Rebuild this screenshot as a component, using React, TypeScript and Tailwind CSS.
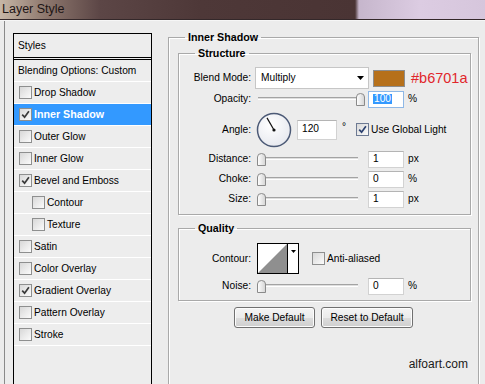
import clsx from 'clsx';

const styleRows = [
  { label: 'Drop Shadow' },
  { label: 'Inner Shadow', checked: true, active: true },
  { label: 'Outer Glow' },
  { label: 'Inner Glow' },
  { label: 'Bevel and Emboss', checked: true },
  { label: 'Contour', indent: true },
  { label: 'Texture', indent: true },
  { label: 'Satin' },
  { label: 'Color Overlay' },
  { label: 'Gradient Overlay', checked: true },
  { label: 'Pattern Overlay' },
  { label: 'Stroke' },
];

const Check = ({ checked, blue }: { checked?: boolean; blue?: boolean }) => (
  <span
    className={clsx(
      'flex h-[13px] w-[13px] shrink-0 items-center justify-center border bg-[linear-gradient(135deg,#d8d8d8,#fbfbfb)]',
      blue ? 'border-[#6d7a93]' : 'border-[#8e8f8f]'
    )}
  >
    {checked && (
      <svg width="9" height="9" viewBox="0 0 9 9">
        <path d="M1.2 4.6 L3.6 7.2 L7.9 1.2" fill="none" stroke={blue ? '#2c4270' : '#3a3a3a'} strokeWidth="1.7" />
      </svg>
    )}
  </span>
);

const Slider = ({ value }: { value: number }) => (
  <div className="relative h-[14px] w-[109px] shrink-0">
    <div className="absolute left-[3px] top-[5px] h-[3px] w-[100px] border-t border-b border-t-[#a3a3a3] border-b-white bg-[#dedede]" />
    <svg
      className="absolute top-[1px]"
      style={{ left: 2 + (value * 99) / 100 }}
      width="9"
      height="13"
      viewBox="0 0 9 13"
    >
      <defs>
        <linearGradient id="thumb" x1="0" y1="0" x2="1" y2="0">
          <stop offset="0" stopColor="#ffffff" />
          <stop offset="1" stopColor="#d4d4d4" />
        </linearGradient>
      </defs>
      <path d="M0.5 4 Q0.5 0.5 4.5 0.5 Q8.5 0.5 8.5 4 V12.5 H0.5 Z" fill="url(#thumb)" stroke="#8a8a8a" />
    </svg>
  </div>
);

const Field = ({ value, selected, wide }: { value: string; selected?: boolean; wide?: boolean }) => (
  <div
    className={clsx(
      'flex shrink-0 items-center border bg-white pl-[4px] leading-none',
      wide ? 'h-[20px] w-[40px]' : 'h-[17px] w-[36px]',
      selected ? 'border-[#8fb8e6]' : 'border-[#d2d2d2] border-t-[#b4b4b4]'
    )}
  >
    {selected ? <span className="bg-[#3399ff] px-[1px] text-white">{value}</span> : <span>{value}</span>}
  </div>
);

const Label = ({ children }: { children: string }) => (
  <span className="w-[72px] shrink-0 text-right">{children}</span>
);

const SliderRow = ({ label, value, unit, mt }: { label: string; value: string; unit: string; mt?: string }) => (
  <div className={clsx('flex h-[20px] items-center gap-[4px]', mt)}>
    <Label>{label}</Label>
    <Slider value={0} />
    <Field value={value} />
    <span>{unit}</span>
  </div>
);

const Dial = () => (
  <svg width="36" height="36" viewBox="0 0 36 36" className="ml-[1px] shrink-0">
    <defs>
      <radialGradient id="dial" cx="0.4" cy="0.35" r="0.7">
        <stop offset="0" stopColor="#ffffff" />
        <stop offset="1" stopColor="#e6e8ee" />
      </radialGradient>
    </defs>
    <circle cx="18" cy="18" r="16.5" fill="url(#dial)" stroke="#4c5a76" strokeWidth="1.5" />
    <line x1="18" y1="18" x2="11" y2="5.9" stroke="#111" strokeWidth="1.2" />
    <circle cx="18" cy="18" r="1.6" fill="#111" />
  </svg>
);

const Button = ({ children, w }: { children: string; w: string }) => (
  <div
    className={clsx(
      'flex h-[21px] items-center justify-center rounded-[3px] border border-[#707070] bg-[linear-gradient(#f4f4f4_0%,#ebebeb_50%,#dddddd_51%,#cfcfcf_100%)] shadow-[inset_0_0_0_1px_#fcfcfc]',
      w
    )}
  >
    {children}
  </div>
);

const legend = 'ml-[16px] px-[3px] text-[10.7px] font-bold leading-[14px]';
const group = 'border border-[#a9a9a9] shadow-[inset_1px_1px_0_#ffffff,1px_1px_0_#ffffff]';

export default function App() {
  return (
    <div className="h-[384px] w-[485px] overflow-hidden bg-[#ececec] font-['Liberation_Sans',Arial,sans-serif] text-[10.2px] text-black">
      <div className="h-[20px] border-b border-[#34282a] bg-[linear-gradient(90deg,#c6b6a6_0px,#8e786e_45px,#5c4646_100px,#4e3838_200px,#4a3434_355px,#c6b6cc_359px,#dccce2_420px,#d6c6dc_485px)] pl-[2px] text-[12.5px] leading-[19px] text-[#1d1515]">
        Layer Style
      </div>
      <div className="flex border-t border-[#f6f6f6]">
        <div className="w-[148px] shrink-0 ml-[4px] border-l border-[#8a8a8a] pl-[8px] pt-[12px]">
          <div className="h-[380px] w-[139px] border border-black bg-[#ededed]">
            <div className="flex h-[26px] items-center border-b-[3px] border-double border-black pl-[4px]">Styles</div>
            <div className="flex h-[22px] items-center border-b border-white pl-[4px]">Blending Options: Custom</div>
            {styleRows.map((r) => (
              <div
                key={r.label}
                className={clsx(
                  'flex h-[22px] items-center gap-[2px] border-b border-white',
                  r.indent ? 'pl-[18px]' : 'pl-[5px]',
                  r.active && 'bg-[#3399ff] text-[10.7px] font-bold text-white'
                )}
              >
                <Check checked={r.checked} />
                <span>{r.label}</span>
              </div>
            ))}
          </div>
        </div>

        <fieldset className={clsx('ml-[16px] mt-[9px] h-[420px] w-[311px] shrink-0', group)}>
          <legend className={legend}>Inner Shadow</legend>

          <fieldset className={clsx('ml-[9px] mt-[2px] w-[293px]', group)}>
            <legend className={legend}>Structure</legend>
            <div className="flex flex-col pb-[5px] pt-[7px]">
              <div className="flex h-[22px] items-center gap-[4px]">
                <Label>Blend Mode:</Label>
                <div className="flex h-[22px] w-[114px] items-center justify-between border border-[#c6c6c6] bg-white pl-[5px] pr-[4px]">
                  <span>Multiply</span>
                  <svg width="7" height="4" viewBox="0 0 7 4">
                    <path d="M0 0 H7 L3.5 4 Z" fill="#000" />
                  </svg>
                </div>
                <div className="h-[17px] w-[32px] border border-[#8d8d8d] bg-[#b6701a]" />
                <span className="ml-[2px] text-[14.5px] leading-none text-[#e1262b]">#b6701a</span>
              </div>

              <div className="flex h-[20px] items-center gap-[4px]">
                <Label>Opacity:</Label>
                <Slider value={100} />
                <Field value="100" selected />
                <span>%</span>
              </div>

              <div className="mt-[3px] flex h-[35px] items-center gap-[4px]">
                <Label>Angle:</Label>
                <Dial />
                <span className="ml-[1px]">
                  <Field value="120" wide />
                </span>
                <span className="mb-[6px] ml-[1px]">°</span>
                <span className="ml-[6px] flex items-center gap-[2px]">
                  <Check checked blue />
                  <span>Use Global Light</span>
                </span>
              </div>

              <SliderRow label="Distance:" value="1" unit="px" mt="mt-[2px]" />
              <SliderRow label="Choke:" value="0" unit="%" />
              <SliderRow label="Size:" value="1" unit="px" />
            </div>
          </fieldset>

          <fieldset className={clsx('ml-[9px] mt-[6px] w-[293px]', group)}>
            <legend className={legend}>Quality</legend>
            <div className="flex flex-col pb-[4px] pt-[8px]">
              <div className="flex h-[31px] items-center gap-[4px]">
                <Label>Contour:</Label>
                <div className="ml-[2px] flex h-[31px] w-[42px] border border-black bg-white">
                  <svg width="29" height="29" viewBox="0 0 29 29" className="shrink-0">
                    <path d="M0 29 L29 0 V29 Z" fill="#8f8f8f" />
                  </svg>
                  <div className="flex flex-1 justify-center border-l border-black pt-[6px]">
                    <svg width="5" height="3" viewBox="0 0 5 3">
                      <path d="M0 0 H5 L2.5 3 Z" fill="#000" />
                    </svg>
                  </div>
                </div>
                <span className="ml-[9px] flex items-center gap-[2px]">
                  <Check />
                  <span>Anti-aliased</span>
                </span>
              </div>
              <SliderRow label="Noise:" value="0" unit="%" mt="mt-[2px]" />
            </div>
          </fieldset>

          <div className="mt-[6px] flex justify-center gap-[6px]">
            <Button w="w-[81px]">Make Default</Button>
            <Button w="w-[92px]">Reset to Default</Button>
          </div>

          <div className="mt-[29px] pr-[10px] text-right text-[12px] leading-[15px] text-[#1a1a1a]">alfoart.com</div>
        </fieldset>
      </div>
    </div>
  );
}
